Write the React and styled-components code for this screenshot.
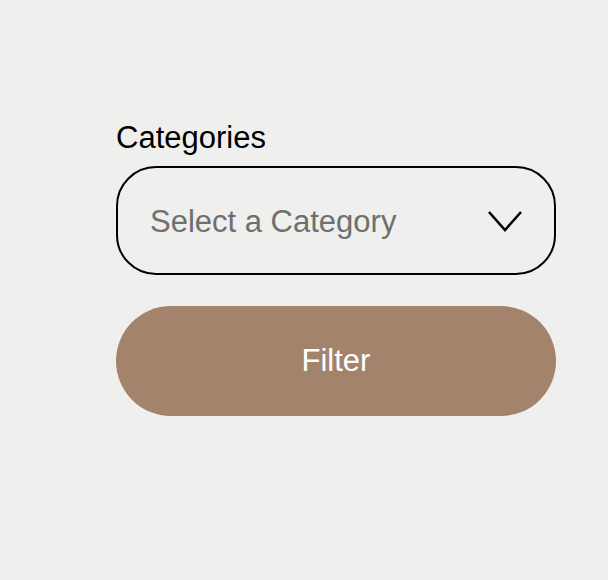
import React from "react";
import styled, { createGlobalStyle } from "styled-components";

const GlobalStyle = createGlobalStyle`
  html, body {
    margin: 0;
    padding: 0;
    background: #efefed;
    font-family: "Liberation Sans", Arial, sans-serif;
  }
`;

const Page = styled.div`
  min-height: 580px;
  padding: 120px 0 0 116px;
  box-sizing: border-box;
`;

const Form = styled.form`
  width: 440px;
  display: flex;
  flex-direction: column;
`;

const Label = styled.label`
  font-size: 31px;
  line-height: 36px;
  color: #000;
  margin-bottom: 10px;
`;

const SelectBox = styled.div`
  height: 109px;
  box-sizing: border-box;
  border: 2px solid #000;
  border-radius: 40px;
  display: flex;
  align-items: center;
  justify-content: space-between;
  padding: 0 31px 0 32px;
  margin-bottom: 31px;
  cursor: pointer;
`;

const Placeholder = styled.span`
  font-size: 31px;
  color: #6f6f6f;
  padding-top: 2px;
`;

const FilterButton = styled.button`
  height: 110px;
  border: none;
  border-radius: 55px;
  background: #a3836c;
  color: #fff;
  font-family: inherit;
  font-size: 31px;
  cursor: pointer;
`;

const Chevron = () => (
  <svg width="36" height="24" viewBox="0 0 36 24" fill="none" style={{ marginTop: 2 }}>
    <path d="M2 2 L18 20 L34 2" stroke="#000" strokeWidth="2.6" />
  </svg>
);

export default function App() {
  return (
    <>
      <GlobalStyle />
      <Page>
        <Form onSubmit={e => e.preventDefault()}>
          <Label>Categories</Label>
          <SelectBox>
            <Placeholder>Select a Category</Placeholder>
            <Chevron />
          </SelectBox>
          <FilterButton type="submit">Filter</FilterButton>
        </Form>
      </Page>
    </>
  );
}
